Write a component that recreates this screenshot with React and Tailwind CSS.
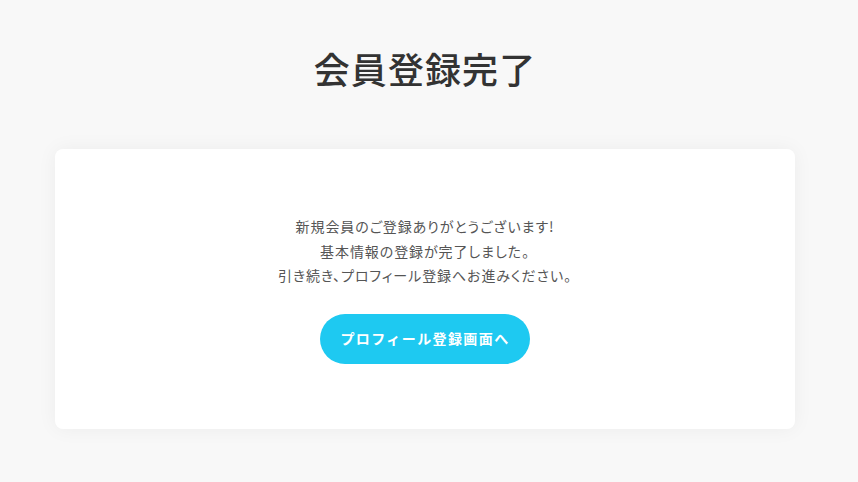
export default function App() {
  return (
    <div
      className="min-h-[482px] bg-[#f8f8f8] flex flex-col items-center pt-[42px] pr-[8px]"
      style={{ fontFamily: '"Noto Sans CJK JP", "Noto Sans", sans-serif' }}
    >
      {/* Title */}
      <h1 className="text-[36px] leading-[52px] font-medium text-[#333333] tracking-[0.03em]">
        会員登録完了
      </h1>

      {/* Card */}
      <div className="mt-[55px] w-[740px] h-[280px] bg-white rounded-lg shadow-[0_0_20px_rgba(0,0,0,0.05)] flex flex-col items-center pt-[65px]">
        <p className="text-[14px] leading-[24.5px] text-[#555555] text-center tracking-[0.065em] [font-feature-settings:'palt']">
          新規会員のご登録ありがとうございます!
          <br />
          基本情報の登録が完了しました。
          <br />
          引き続き、プロフィール登録へお進みください。
        </p>
        <button className="mt-[26px] w-[210px] h-[50px] rounded-full bg-[#1ec9f1] text-white text-[14px] font-bold tracking-[0.1em]">
          プロフィール登録画面へ
        </button>
      </div>
    </div>
  );
}
